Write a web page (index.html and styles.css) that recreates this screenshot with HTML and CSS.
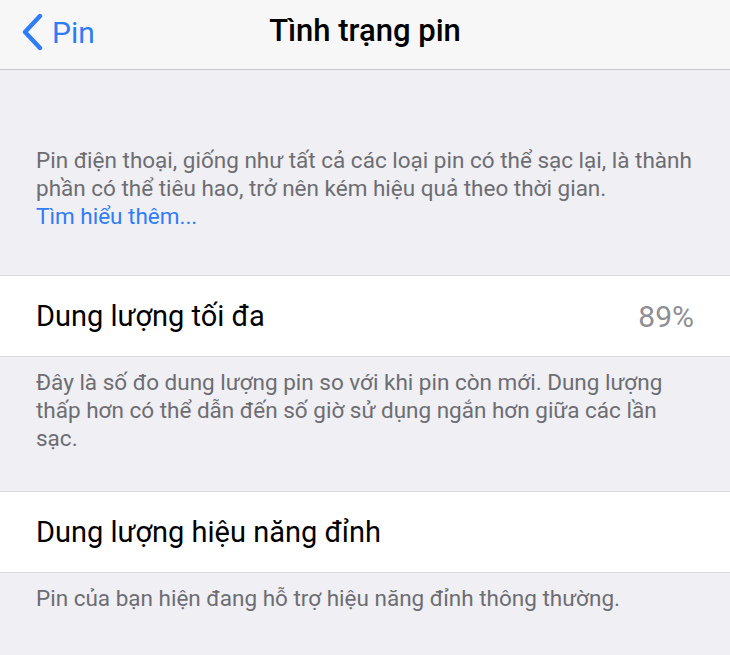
FILE: index.html
```html
<!DOCTYPE html>
<html lang="vi">
<head>
<meta charset="utf-8">
<title>Tình trạng pin</title>
<link rel="stylesheet" href="styles.css">
</head>
<body>
<header class="navbar">
  <a class="back" href="#">
    <svg class="chevron" width="24" height="38" viewBox="0 0 24 38"><path d="M20 3 L5 19 L20 35" fill="none" stroke="currentColor" stroke-width="4.4" stroke-linecap="round" stroke-linejoin="round"/></svg>
    <span>Pin</span>
  </a>
  <h1 class="title">Tình trạng pin</h1>
</header>
<main class="content">
  <section class="intro">
    <p class="note">Pin điện thoại, giống như tất cả các loại pin có thể sạc lại, là thành phần có thể tiêu hao, trở nên kém hiệu quả theo thời gian.<br><a class="link" href="#">Tìm hiểu thêm...</a></p>
  </section>
  <div class="cell">
    <span class="cell-label">Dung lượng tối đa</span>
    <span class="cell-value">89%</span>
  </div>
  <p class="note footer">Đây là số đo dung lượng pin so với khi pin còn mới. Dung lượng thấp hơn có thể dẫn đến số giờ sử dụng ngắn hơn giữa các lần sạc.</p>
  <div class="cell">
    <span class="cell-label">Dung lượng hiệu năng đỉnh</span>
  </div>
  <p class="note footer">Pin của bạn hiện đang hỗ trợ hiệu năng đỉnh thông thường.</p>
</main>
</body>
</html>
```
FILE: styles.css
```css
* { box-sizing: border-box; }
html, body { margin: 0; padding: 0; }
body {
  width: 730px;
  height: 655px;
  overflow: hidden;
  background: #efeff4;
  font-family: Roboto, "Noto Sans", sans-serif;
  -webkit-font-smoothing: antialiased;
}
.navbar {
  position: relative;
  height: 70px;
  background: #f7f7f8;
  border-bottom: 1px solid #c8c7cc;
  display: flex;
  align-items: center;
  justify-content: center;
}
.back {
  position: absolute;
  left: 20px;
  top: 12px;
  display: flex;
  align-items: center;
  gap: 8px;
  color: #2f7cf6;
  text-decoration: none;
  font-size: 30px;
  height: 40px;
}
.chevron { display: block; }
.title {
  margin: 0 0 8px;
  font-size: 31px;
  font-weight: 500;
  color: #000;
}
.content { display: flex; flex-direction: column; }
.intro { padding: 76px 0 0; }
.note {
  margin: 0;
  padding: 0 30px 45px 36px;
  font-size: 22.5px;
  line-height: 28px;
  color: #6d6d72;
}
.link { color: #2f7cf6; text-decoration: none; }
.cell {
  height: 82px;
  background: #fff;
  border-top: 1px solid #d8d8dc;
  border-bottom: 1px solid #d8d8dc;
  display: flex;
  align-items: center;
  justify-content: space-between;
  padding: 0 36px;
  font-size: 29px;
  color: #000;
}
.cell-value { color: #8e8e93; font-size: 30px; }
.footer { padding-top: 11px; padding-bottom: 39px; }
```
